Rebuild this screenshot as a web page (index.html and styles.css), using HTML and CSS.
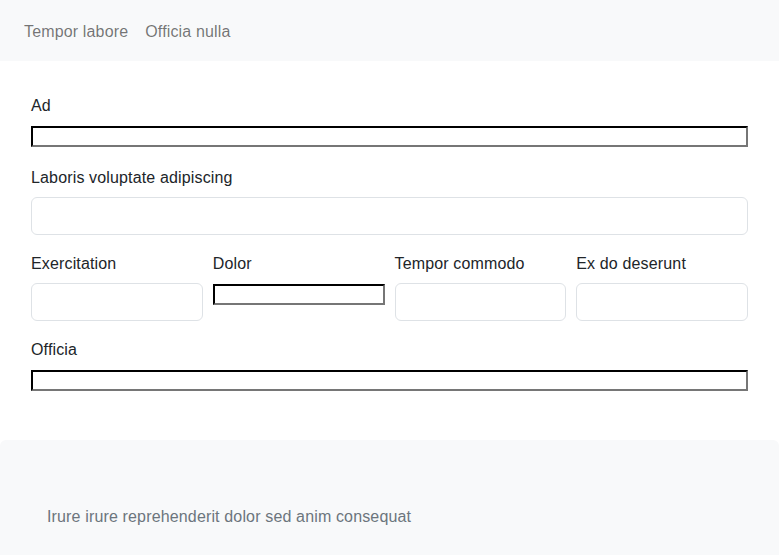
FILE: index.html
```html
<!DOCTYPE html>
<html>
<head>
<meta charset="utf-8">
<link rel="stylesheet" href="styles.css">
</head>
<body>
<nav class="navbar">
  <a class="nav-link" href="#">Tempor labore</a>
  <a class="nav-link" href="#">Officia nulla</a>
</nav>
<main class="main">
  <form class="form">
    <div class="field">
      <label class="label">Ad</label>
      <div class="plain-wrap"><input class="plain" type="text"></div>
    </div>
    <div class="field">
      <label class="label">Laboris voluptate adipiscing</label>
      <input class="control" type="text">
    </div>
    <div class="row">
      <div class="field">
        <label class="label">Exercitation</label>
        <input class="control" type="text">
      </div>
      <div class="field">
        <label class="label">Dolor</label>
        <div class="plain-wrap"><input class="plain" type="text"></div>
      </div>
      <div class="field">
        <label class="label">Tempor commodo</label>
        <input class="control" type="text">
      </div>
      <div class="field">
        <label class="label">Ex do deserunt</label>
        <input class="control" type="text">
      </div>
    </div>
    <div class="field">
      <label class="label">Officia</label>
      <div class="plain-wrap"><input class="plain" type="text"></div>
    </div>
  </form>
</main>
<footer class="footer">
  <p class="footer-text">Irure irure reprehenderit dolor sed anim consequat</p>
</footer>
</body>
</html>
```

FILE: styles.css
```css
* { box-sizing: border-box; }
html, body { margin: 0; padding: 0; }
body {
  font-family: "Liberation Sans", Arial, sans-serif;
  font-size: 16px;
  line-height: 1.5;
  letter-spacing: 0.15px;
  color: #212529;
  background: #fff;
  width: 779px;
  height: 555px;
  overflow: hidden;
}
.navbar {
  background: #f8f9fa;
  height: 61px;
  display: flex;
  align-items: center;
  padding: 2px 16px 0;
}
.nav-link {
  color: rgba(0, 0, 0, 0.55);
  text-decoration: none;
  padding: 8px 8px;
  margin-right: 1px;
}
.main {
  padding: 32px 31px 31px;
}
.form { margin: 0; }
.field {
  display: flex;
  flex-direction: column;
  margin-bottom: 16px;
}
.label {
  display: block;
  padding-top: 1px;
  margin-bottom: 7px;
}
.plain-wrap {
  height: 24px;
  padding-top: 1px;
}
.plain {
  display: block;
  width: 100%;
  font-family: Arial, sans-serif;
  font-size: 13.33px;
  line-height: normal;
  border: 2px inset #767676;
  border-top-color: #1a1a1a;
  border-left-color: #1a1a1a;
  border-bottom-color: #767676;
  border-right-color: #767676;
  padding: 1px 2px;
  height: 21px;
  background: #fff;
  margin: 0;
}
.control {
  display: block;
  width: 100%;
  height: 38px;
  border: 1px solid #dee2e6;
  border-radius: 6px;
  padding: 6px 12px;
  font: inherit;
  background: #fff;
}
.row {
  display: grid;
  grid-template-columns: repeat(4, 1fr);
  gap: 10px;
}
.footer {
  background: #f8f9fa;
  border-radius: 6px 6px 0 0;
  padding: 65px 47px 48px;
}
.footer-text {
  margin: 0;
  color: #6c757d;
}
```
